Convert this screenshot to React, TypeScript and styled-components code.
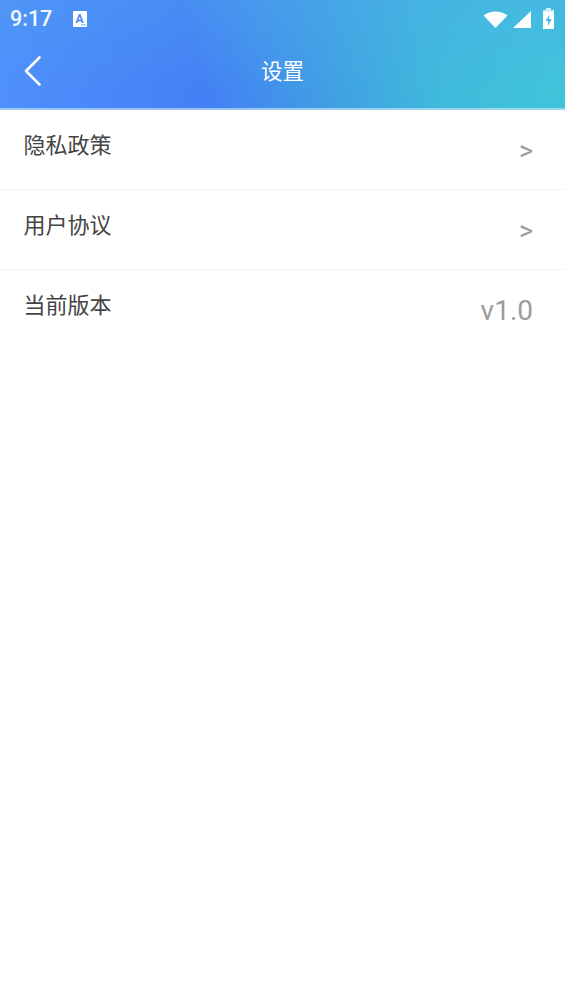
import React from 'react'
import styled, { createGlobalStyle } from 'styled-components'

const GlobalStyle = createGlobalStyle`
  html,
  body {
    margin: 0;
    padding: 0;
    background: #fff;
    font-family: Roboto, "Noto Sans CJK SC", sans-serif;
  }
`

const Page = styled.div`
  width: 565px;
  height: 1005px;
  background: #fff;
  overflow: hidden;
`

const Header = styled.header`
  height: 110px;
  box-sizing: border-box;
  border-bottom: 2px solid rgba(255, 255, 255, 0.45);
  background-image:
    linear-gradient(180deg, rgba(80, 165, 240, 0.35) 0%, rgba(80, 165, 240, 0) 85%),
    linear-gradient(75deg, #4f90fc 0%, #4480f5 35%, #40a2e2 58%, #3fbadb 75%, #40c4da 95%, #3fc0db 100%);
`

const StatusBar = styled.div`
  height: 37px;
  display: flex;
  align-items: center;
  padding: 0 11px 0 10px;
  color: #fff;
`

const Clock = styled.span`
  font-size: 21.5px;
  font-weight: 500;
  opacity: 0.95;
  margin-right: 20px;
`

const StatusIcons = styled.div`
  margin-left: auto;
  display: flex;
  align-items: flex-end;
`

const Signal = styled.svg`
  margin: 0 12px 0 5px;
`

const NavBar = styled.div`
  height: 68px;
  display: grid;
  grid-template-columns: 70px 1fr 70px;
  align-items: center;
  color: #fff;
`

const Back = styled.button`
  border: 0;
  padding: 0 0 0 23px;
  background: none;
  display: flex;
  align-items: center;
  height: 100%;
`

const Title = styled.h1`
  margin: 0;
  padding-bottom: 4px;
  text-align: center;
  font-family: "Noto Sans CJK SC", sans-serif;
  font-size: 21.5px;
  font-weight: 400;
`

const Row = styled.div`
  height: 80px;
  box-sizing: border-box;
  border-bottom: 1px solid #f3f3f3;
  padding: 16px 32px 0 23.5px;
  display: flex;
  justify-content: space-between;

  &:last-child {
    border-bottom: 0;
  }
`

const Label = styled.span`
  font-family: "Noto Sans CJK SC", sans-serif;
  font-size: 22px;
  line-height: 34px;
  color: #444;
`

const Value = styled.span<{ $large?: boolean }>`
  font-family: Roboto, sans-serif;
  font-size: ${p => (p.$large ? '28px' : '27px')};
  line-height: 34px;
  margin-top: 8px;
  color: #9c9c9c;
`

const TranslateIcon = () => (
  <svg width="16" height="18" viewBox="0 0 16 18">
    <path fill="#fff" d="M2 1h12a1 1 0 0 1 1 1v14a1 1 0 0 1-1 1H2a1 1 0 0 1-1-1V2a1 1 0 0 1 1-1z" />
    <text x="7.500" y="12.500" textAnchor="middle" fontFamily="Roboto, sans-serif" fontWeight="700" fontSize="12" fill="#4a8cf8">A</text>
    <path fill="#a9c8fb" d="M9 14h5v1.500H9z" />
  </svg>
)

const WifiIcon = () => (
  <svg width="25" height="18" viewBox="0 0 25 18">
    <path fill="#fff" d="M12.500 17 0.500 4.500C4 1.800 8 .5 12.500 .5S21 1.800 24.500 4.500z" />
  </svg>
)

const SignalIcon = () => (
  <Signal width="18" height="18" viewBox="0 0 18 18">
    <path fill="#fff" d="M18 0v17H0z" />
  </Signal>
)

const BatteryIcon = () => (
  <svg width="11" height="21" viewBox="0 0 11 21">
    <path fill="#fff" fillOpacity="0.75" d="M3 0h5v2h3v3H0V2h3z" />
    <path fill="#fff" fillRule="evenodd" d="M0 4h11v17H0zM6.500 6.500 2.800 13h2.300v5l3.400-7H6z" />
  </svg>
)

const ChevronLeft = () => (
  <svg width="20" height="32" viewBox="0 0 20 32">
    <path d="M16.500 2.500 3 16l13.500 13.500" fill="none" stroke="#fff" strokeWidth="2.600" strokeLinecap="round" strokeLinejoin="round" />
  </svg>
)

const rows = [
  { label: '隐私政策', value: '>' },
  { label: '用户协议', value: '>' },
  { label: '当前版本', value: 'v1.0', large: true },
]

export default function App() {
  return (
    <Page>
      <GlobalStyle />
      <Header>
        <StatusBar>
          <Clock>9:17</Clock>
          <TranslateIcon />
          <StatusIcons>
            <WifiIcon />
            <SignalIcon />
            <BatteryIcon />
          </StatusIcons>
        </StatusBar>
        <NavBar>
          <Back aria-label="返回">
            <ChevronLeft />
          </Back>
          <Title>设置</Title>
        </NavBar>
      </Header>
      {rows.map(row => (
        <Row key={row.label}>
          <Label>{row.label}</Label>
          <Value $large={row.large}>{row.value}</Value>
        </Row>
      ))}
    </Page>
  )
}
